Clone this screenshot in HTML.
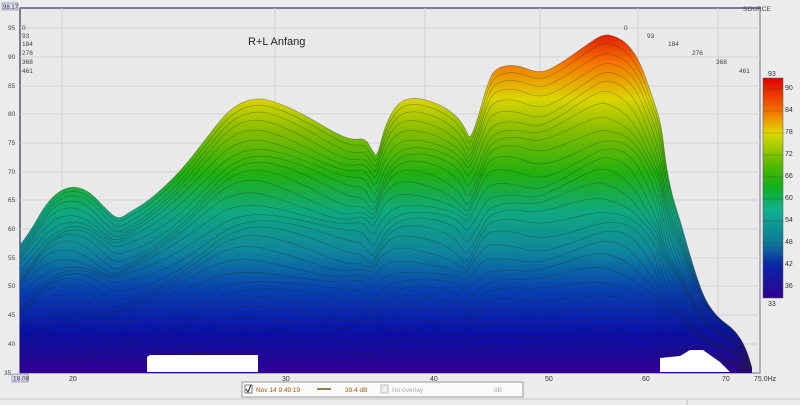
<!DOCTYPE html>
<html><head><meta charset="utf-8"><style>
html,body{margin:0;padding:0;width:800px;height:405px;overflow:hidden;background:#ececec;font-family:"Liberation Sans",sans-serif}
svg{display:block}
</style></head><body>
<svg id="s" width="800" height="405" viewBox="0 0 800 405" xmlns="http://www.w3.org/2000/svg" font-family="Liberation Sans, sans-serif">
<defs>
<linearGradient id="g" gradientUnits="userSpaceOnUse" x1="0" y1="30" x2="0" y2="373">
<stop offset="0" stop-color="#e00a00"/>
<stop offset="0.1" stop-color="#f57a00"/>
<stop offset="0.2" stop-color="#dcd400"/>
<stop offset="0.3" stop-color="#80bc00"/>
<stop offset="0.42" stop-color="#20b010"/>
<stop offset="0.53" stop-color="#10a880"/>
<stop offset="0.64" stop-color="#10889c"/>
<stop offset="0.76" stop-color="#0840b0"/>
<stop offset="0.88" stop-color="#0a10a8"/>
<stop offset="1" stop-color="#300090"/>
</linearGradient>
<linearGradient id="cb" x1="0" y1="0" x2="0" y2="1">
<stop offset="0" stop-color="#e00000"/>
<stop offset="0.15" stop-color="#f57000"/>
<stop offset="0.25" stop-color="#e0d800"/>
<stop offset="0.4" stop-color="#50b800"/>
<stop offset="0.5" stop-color="#10b020"/>
<stop offset="0.6" stop-color="#10b090"/>
<stop offset="0.75" stop-color="#107898"/>
<stop offset="0.85" stop-color="#0828a8"/>
<stop offset="1" stop-color="#300090"/>
</linearGradient>
<clipPath id="cp"><path id="cpp" d=""/></clipPath>
</defs>
<rect x="0" y="0" width="800" height="405" fill="#ececec"/>
<rect x="20" y="8" width="740" height="365" fill="#e9e9e9" stroke="#9a9aae" stroke-width="1.5"/>
<line x1="20" y1="8" x2="760" y2="8" stroke="#7a7a92" stroke-width="2"/>
<line x1="20" y1="8" x2="20" y2="373" stroke="#7a7a92" stroke-width="2"/>
<g id="grid" stroke="#d2d2d2" stroke-width="1"></g>
<g font-size="6.5" fill="#444">
<text x="8" y="30">95</text><text x="8" y="59">90</text><text x="8" y="88">85</text><text x="8" y="116">80</text><text x="8" y="145">75</text><text x="8" y="174">70</text><text x="8" y="202">65</text><text x="8" y="231">60</text><text x="8" y="260">55</text><text x="8" y="288">50</text><text x="8" y="317">45</text><text x="8" y="346">40</text><text x="4" y="375">35</text>
<text x="22" y="30">0</text><text x="22" y="38">93</text><text x="22" y="46">184</text><text x="22" y="55">276</text><text x="22" y="64">368</text><text x="22" y="73">461</text>
<text x="624" y="30">0</text><text x="647" y="38">93</text><text x="668" y="46">184</text><text x="692" y="55">276</text><text x="716" y="64">368</text><text x="739" y="73">461</text>
<text x="743" y="11">SOURCE</text>
</g>
<rect x="2" y="3" width="16" height="7" fill="#dde" stroke="#7a7a92" stroke-width="0.6"/>
<text x="3" y="9" font-size="6" fill="#335">98.17</text>
<path id="shape" fill="url(#g)" d=""/>
<g id="lines" clip-path="url(#cp)" fill="none" stroke="#1a2a10" stroke-opacity="0.4" stroke-width="0.6"></g>
<path id="outline" fill="none" stroke="#333" stroke-opacity="0.5" stroke-width="0.6" d=""/>
<path d="M147,357 L150,355 L258,355 L258,372 L147,372 Z" fill="#fff"/>
<path d="M660,358 L680,356 L690,350 L703,350 L720,362 L730,372 L660,372 Z" fill="#fff"/>
<text x="248" y="45" font-size="11" fill="#222">R+L Anfang</text>
<rect x="763" y="78" width="20" height="220" fill="url(#cb)" stroke="#555" stroke-width="0.5"/>
<g font-size="7" fill="#333">
<text x="768" y="76">93</text><text x="785" y="90">90</text><text x="785" y="112">84</text><text x="785" y="134">78</text><text x="785" y="156">72</text><text x="785" y="178">66</text><text x="785" y="200">60</text><text x="785" y="222">54</text><text x="785" y="244">48</text><text x="785" y="266">42</text><text x="785" y="288">36</text><text x="768" y="306">33</text>
</g>
<g stroke="#333" stroke-opacity="0.5" stroke-width="0.6">
<line x1="763" y1="89" x2="783" y2="89"/><line x1="763" y1="111" x2="783" y2="111"/><line x1="763" y1="133" x2="783" y2="133"/><line x1="763" y1="155" x2="783" y2="155"/><line x1="763" y1="177" x2="783" y2="177"/><line x1="763" y1="199" x2="783" y2="199"/><line x1="763" y1="221" x2="783" y2="221"/><line x1="763" y1="243" x2="783" y2="243"/><line x1="763" y1="265" x2="783" y2="265"/><line x1="763" y1="287" x2="783" y2="287"/>
</g>
<rect x="12" y="374" width="16" height="8" fill="#dde" stroke="#7a7a92" stroke-width="0.6"/>
<text x="13" y="380.5" font-size="6.5" fill="#335">18.08</text>
<g font-size="7" fill="#333">
<text x="69" y="381">20</text><text x="282" y="381">30</text><text x="430" y="381">40</text><text x="545" y="381">50</text><text x="642" y="381">60</text><text x="722" y="381">70</text><text x="754" y="381">75.0Hz</text>
</g>
<rect x="242" y="382" width="281" height="15" fill="#fafafa" stroke="#999" stroke-width="1"/>
<rect x="245" y="385" width="7" height="8" fill="#fff" stroke="#444" stroke-width="0.7"/>
<path d="M246,389 L248,392 L251,385" stroke="#222" fill="none"/>
<text x="256" y="392" font-size="6.5" fill="#a05800">Nov 14 9:49:19</text>
<line x1="317" y1="389" x2="331" y2="389" stroke="#6a5a20" stroke-width="1.5"/>
<text x="345" y="392" font-size="6.5" fill="#a05800">39.4 dB</text>
<rect x="381" y="385" width="7" height="8" fill="#eee" stroke="#aaa" stroke-width="0.7"/>
<text x="392" y="392" font-size="6.5" fill="#aaa">No overlay</text>
<text x="494" y="392" font-size="6.5" fill="#aaa">dB</text>
<line x1="0" y1="399" x2="800" y2="399" stroke="#c8c8c8"/>
<line x1="687" y1="400" x2="687" y2="405" stroke="#bbb"/>
</svg>
<script>
var P=[[20,245],[30,232],[45,205],[60,190],[75,186],[90,192],[105,208],[118,220],[130,212],[150,200],[180,172],[205,140],[230,108],[255,97],[280,103],[310,118],[335,133],[352,140],[365,138],[372,150],[377,158],[385,125],[398,102],[415,97],[440,104],[458,117],[466,130],[470,140],[478,118],[487,85],[495,68],[515,64],[540,74],[560,64],[585,46],[603,34],[615,36],[628,44],[640,62],[650,90],[657,110],[662,130],[666,165],[672,195],[680,220],[688,248],[696,275],[705,300],[718,318],[735,330],[746,348],[752,368]];
function d(pts){var s="M"+pts[0][0]+","+pts[0][1];for(var i=1;i<pts.length-1;i++){var mx=(pts[i][0]+pts[i+1][0])/2,my=(pts[i][1]+pts[i+1][1])/2;s+=" Q"+pts[i][0]+","+pts[i][1]+" "+mx+","+my;}s+=" L"+pts[pts.length-1][0]+","+pts[pts.length-1][1];return s;}
var sh=d(P)+" L752,373 L20,373 Z";
document.getElementById("shape").setAttribute("d",sh);
document.getElementById("cpp").setAttribute("d",sh);
document.getElementById("outline").setAttribute("d",d(P));
var g=document.getElementById("lines"),ns="http://www.w3.org/2000/svg";
for(var k=1;k<28;k++){var t=k/28;var pts=P.map(function(p,i){var base=373;var wob=Math.sin(i*0.7+k*0.9)*6*t*(1-t)*3;return [p[0]-t*8,p[1]+(base-p[1])*Math.pow(t,1.1)*0.95+wob];});
var e=document.createElementNS(ns,"path");e.setAttribute("d",d(pts));g.appendChild(e);}
var gr=document.getElementById("grid");
[28,57,86,114,143,172,200,229,258,286,315,344].forEach(function(y){var l=document.createElementNS(ns,"line");l.setAttribute("x1",20);l.setAttribute("x2",760);l.setAttribute("y1",y);l.setAttribute("y2",y);gr.appendChild(l);});
[62,275,425,540,638,718].forEach(function(x){var l=document.createElementNS(ns,"line");l.setAttribute("x1",x);l.setAttribute("x2",x);l.setAttribute("y1",8);l.setAttribute("y2",373);gr.appendChild(l);});
</script>
</body></html>
